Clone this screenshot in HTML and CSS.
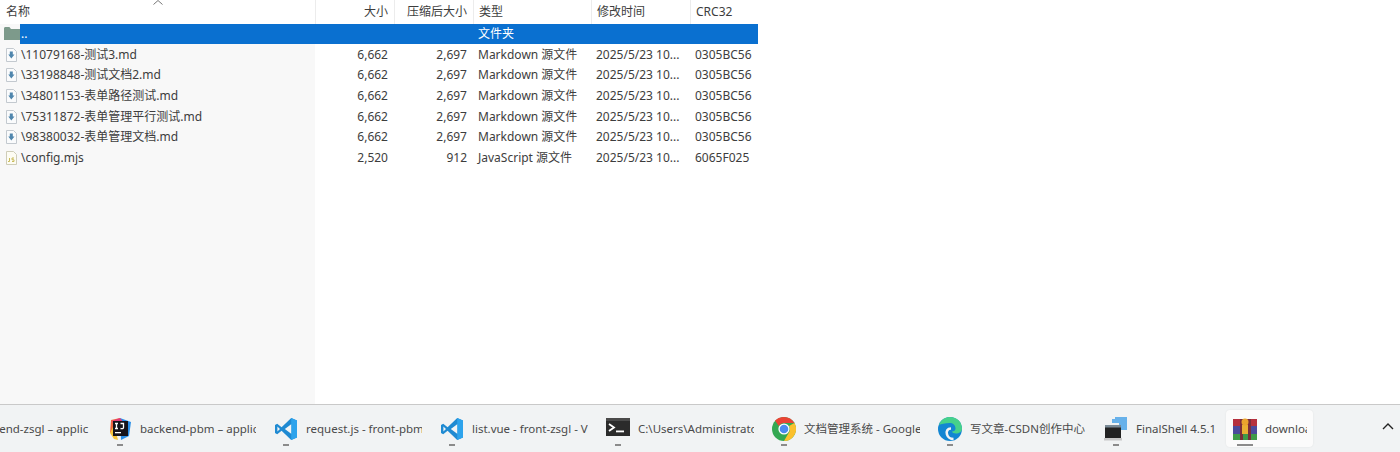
FILE: index.html
```html
<!DOCTYPE html>
<html lang="zh-CN">
<head>
<meta charset="utf-8">
<title>文件列表</title>
<link rel="stylesheet" href="styles.css">
</head>
<body>
<svg class="defs" width="0" height="0" aria-hidden="true">
  <defs>
    <symbol id="md" viewBox="0 0 11 14">
      <path d="M.5.5h7l3 3v10H.5z" fill="#fafbfc" stroke="#c3c9cf"/>
      <path d="M3.800 3.500h3v3h1.700L5.300 10.500 2.300 6.500h1.500z" fill="#4f86ad"/>
    </symbol>
    <symbol id="vscode" viewBox="0 0 24 24">
      <path d="M17.2 1 7.6 10.2 3.2 6.8 1 8v8l2.200 1.200 4.400-3.400 9.600 9.200L23 20.600V3.400z" fill="#1f8ad2"/>
      <path d="M17.2 1 23 3.400v17.200L17.200 23z" fill="#2da3ec"/>
      <path d="M17.2 7.200v9.600L10.800 12zM3.400 9.400 6 12l-2.600 2.600z" fill="#f3f4f5"/>
    </symbol>
  </defs>
</svg>
<main class="window">
  <div class="sidepane"></div>
  <section class="list">
    <div class="row head">
      <span class="c name">名称</span>
      <span class="c num sep">大小</span>
      <span class="c num sep">压缩后大小</span>
      <span class="c sep">类型</span>
      <span class="c sep">修改时间</span>
      <span class="c sep">CRC32</span>
      <svg class="sort" viewBox="0 0 10 5" aria-hidden="true"><path d="M.5 4.500 5 .5l4.500 4" fill="none" stroke="#777"/></svg>
    </div>
    <div class="row parent">
      <svg class="icon folder" viewBox="0 0 16 13" aria-hidden="true"><path d="M0 1.500C0 .7.6 0 1.400 0h4l1.600 2H16v11H0z" fill="#7d9a8b"/></svg>
      <div class="sel">
        <span class="c name">..</span>
        <span class="c num"></span>
        <span class="c num"></span>
        <span class="c">文件夹</span>
        <span class="c"></span>
        <span class="c"></span>
      </div>
    </div>
    <div class="row file">
      <span class="c name"><svg class="icon"><use href="#md"/></svg>\11079168-测试3.md</span>
      <span class="c num">6,662</span><span class="c num">2,697</span><span class="c">Markdown 源文件</span><span class="c">2025/5/23 10...</span><span class="c">0305BC56</span>
    </div>
    <div class="row file">
      <span class="c name"><svg class="icon"><use href="#md"/></svg>\33198848-测试文档2.md</span>
      <span class="c num">6,662</span><span class="c num">2,697</span><span class="c">Markdown 源文件</span><span class="c">2025/5/23 10...</span><span class="c">0305BC56</span>
    </div>
    <div class="row file">
      <span class="c name"><svg class="icon"><use href="#md"/></svg>\34801153-表单路径测试.md</span>
      <span class="c num">6,662</span><span class="c num">2,697</span><span class="c">Markdown 源文件</span><span class="c">2025/5/23 10...</span><span class="c">0305BC56</span>
    </div>
    <div class="row file">
      <span class="c name"><svg class="icon"><use href="#md"/></svg>\75311872-表单管理平行测试.md</span>
      <span class="c num">6,662</span><span class="c num">2,697</span><span class="c">Markdown 源文件</span><span class="c">2025/5/23 10...</span><span class="c">0305BC56</span>
    </div>
    <div class="row file">
      <span class="c name"><svg class="icon"><use href="#md"/></svg>\98380032-表单管理文档.md</span>
      <span class="c num">6,662</span><span class="c num">2,697</span><span class="c">Markdown 源文件</span><span class="c">2025/5/23 10...</span><span class="c">0305BC56</span>
    </div>
    <div class="row file">
      <span class="c name"><svg class="icon" viewBox="0 0 11 14" aria-hidden="true"><path d="M.5.5h7l3 3v10H.5z" fill="#fdfcf3" stroke="#cfcdb8"/><path d="M3.500 7v3.500H2M8 7H6v1.800h2v1.700H6" fill="none" stroke="#c9bb5a"/></svg>\config.mjs</span>
      <span class="c num">2,520</span><span class="c num">912</span><span class="c">JavaScript 源文件</span><span class="c">2025/5/23 10...</span><span class="c">6065F025</span>
    </div>
  </section>
</main>
<footer class="taskbar">
  <div class="task">
    <svg class="tb-icon" aria-hidden="true"><use href="#vscode"/></svg>
    <span class="tb-text">backend-zsgl – applic</span>
  </div>
  <div class="task">
    <svg class="tb-icon" viewBox="0 0 24 24" aria-hidden="true">
      <path d="M3 3 12 1l-4 12-6 3z" fill="#f0663c"/>
      <path d="M12 1l11 4-2 14-8 4z" fill="#2b8fe8"/>
      <path d="M2 16l4-8 4 15-4-1z" fill="#f5c33b"/>
      <path d="M4 4l8-3 4 5-9 6z" fill="#e23a77"/>
      <rect x="5" y="4" width="15" height="15" fill="#16131a"/>
      <path d="M7 6.500h3M8.500 6.500v5M7 11.500h3M12.500 6.500h3v4c0 1-1 1.500-3 1" fill="none" stroke="#fff" stroke-width="1.300"/>
      <rect x="7" y="15" width="6" height="1.300" fill="#fff"/>
    </svg>
    <span class="tb-text">backend-pbm – applic</span>
  </div>
  <div class="task">
    <svg class="tb-icon" aria-hidden="true"><use href="#vscode"/></svg>
    <span class="tb-text">request.js - front-pbm</span>
  </div>
  <div class="task">
    <svg class="tb-icon" aria-hidden="true"><use href="#vscode"/></svg>
    <span class="tb-text">list.vue - front-zsgl - V</span>
  </div>
  <div class="task">
    <svg class="tb-icon" viewBox="0 0 24 24" aria-hidden="true">
      <rect y="1" width="24" height="18" fill="#2b2b2b"/>
      <rect y="1" width="24" height="3" fill="#4a4a4a"/>
      <path d="M3 7l5 3.500L3 14" fill="none" stroke="#fff" stroke-width="1.800"/>
      <rect x="10" y="13.500" width="8" height="1.800" fill="#fff"/>
    </svg>
    <span class="tb-text">C:\Users\Administrator</span>
  </div>
  <div class="task">
    <svg class="tb-icon" viewBox="0 0 24 24" aria-hidden="true">
      <circle cx="12" cy="12" r="12" fill="#33a852"/>
      <path d="M12 0a12 12 0 0 1 10.400 6H12a6 6 0 0 0-5.200 3L3 3.500A12 12 0 0 1 12 0z" fill="#ea4335"/>
      <path d="M22.400 6A12 12 0 0 1 12 24l5.200-9A6 6 0 0 0 17 9z" fill="#fbc02d"/>
      <circle cx="12" cy="12" r="5.600" fill="#fff"/>
      <circle cx="12" cy="12" r="4.300" fill="#4a8bf0"/>
    </svg>
    <span class="tb-text">文档管理系统 - Google</span>
  </div>
  <div class="task">
    <svg class="tb-icon" viewBox="0 0 24 24" aria-hidden="true">
      <circle cx="12" cy="12" r="12" fill="#1386d2"/>
      <path d="M1 8C3 2 8 0 12 0c7 0 12 5 12 11.500 0 3.500-3 5-6 5-2 0-4-.8-4-2 2 0 3.500-1 3.500-3C17.500 8 15 6 11.500 6 7 6 3 7 1 8z" fill="#46d18b"/>
      <path d="M13 11.500c-3.500 0-5 2.500-4 6 .7 2.500 3.500 4.500 6.500 4.500" fill="none" stroke="#f2f3f4" stroke-width="2.600"/>
    </svg>
    <span class="tb-text">写文章-CSDN创作中心</span>
  </div>
  <div class="task short">
    <svg class="tb-icon" viewBox="0 0 24 24" aria-hidden="true">
      <path d="M8 2h3V0h12v13H15V6H8z" fill="#67b1ea"/>
      <rect x="1" y="8" width="16" height="13" fill="#222"/>
      <rect x="1" y="8" width="16" height="2.500" fill="#7a8a96"/>
      <rect y="21" width="18" height="2.500" fill="#c8c8c8"/>
    </svg>
    <span class="tb-text">FinalShell 4.5.12</span>
  </div>
  <div class="task active">
    <svg class="tb-icon" viewBox="0 0 24 24" aria-hidden="true">
      <rect y="2" width="24" height="7" fill="#b5303d"/>
      <rect y="9" width="24" height="8" fill="#4b4a9c"/>
      <rect y="17" width="24" height="6" fill="#3f9a49"/>
      <rect x="7" y="2" width="3" height="21" fill="#7a2f3b"/>
      <rect x="15" y="2" width="3" height="21" fill="#7a2f3b"/>
      <rect x="9" y="8" width="6" height="9" fill="#e9b033"/>
      <circle cx="12" cy="5" r="3.500" fill="#e9a52d"/>
    </svg>
    <span class="tb-text">download</span>
  </div>
  <svg class="chevron" viewBox="0 0 12 7" aria-hidden="true"><path d="M1 6l5-5 5 5" fill="none" stroke="#222" stroke-width="1.400"/></svg>
</footer>
</body>
</html>
```
FILE: styles.css
```css
* { box-sizing: border-box; }
html, body { margin: 0; height: 100%; }
body {
  width: 1400px;
  height: 452px;
  overflow: hidden;
  display: flex;
  flex-direction: column;
  background: #fff;
  color: #3d3d3d;
  font: 12px/20px "Noto Sans", "Noto Sans CJK SC", sans-serif;
}
.defs { position: absolute; }
.window {
  flex: 0 0 405px;
  display: flex;
  position: relative;
  border-bottom: 1px solid #c9c9c9;
}
.sidepane {
  position: absolute;
  left: 0;
  top: 0;
  bottom: 0;
  width: 315px;
  background: #f8f8f8;
}
.list { position: relative; width: 758px; }
.row {
  display: grid;
  grid-template-columns: 315px 79px 79px 118px 99px 68px;
  height: 20.600px;
  align-items: center;
}
.c {
  padding: 0 6px 0 5px;
  white-space: nowrap;
  overflow: hidden;
}
.num { text-align: right; }
.name { display: flex; align-items: center; padding-left: 6px; }
.head {
  position: relative;
  height: 24px;
  background: #fff;
}
.head .sep {
  height: 24px;
  line-height: 24px;
  border-left: 1px solid #ececec;
}
.head .name { background: #fff; height: 24px; }
.sort {
  position: absolute;
  left: 153px;
  top: 0;
  width: 10px;
  height: 5px;
}
.parent {
  display: block;
  position: relative;
  height: 20.600px;
  padding-left: 20px;
}
.parent .folder {
  position: absolute;
  left: 4px;
  top: 3px;
  width: 16px;
  height: 13px;
}
.sel {
  display: grid;
  grid-template-columns: 295px 79px 79px 118px 99px 68px;
  height: 20px;
  align-items: center;
  background: #0a70d0;
  color: #fff;
}
.sel .name { padding-left: 1px; }
.file .icon {
  flex: none;
  width: 11px;
  height: 14px;
  margin-right: 4px;
}
.taskbar {
  flex: 1;
  display: flex;
  align-items: center;
  margin-left: -66px;
  width: 1466px;
  background: #f1f3f4;
  color: #4a4a4a;
  position: relative;
}
.task {
  position: relative;
  flex: 0 0 166px;
  min-width: 0;
  height: 37px;
  display: flex;
  align-items: center;
  gap: 8px;
  padding-left: 8px;
}
.task::after {
  content: "";
  position: absolute;
  left: 17px;
  bottom: 1px;
  width: 6px;
  height: 2px;
  background: #8b8b8b;
}
.task.short { flex-basis: 130px; }
.task.active {
  flex-basis: 87px;
  background: #fbfbfb;
  border-radius: 4px;
  box-shadow: 0 0 2px rgba(0, 0, 0, .08);
  padding-left: 7px;
}
.task.active::after { left: 11px; width: 16px; }
.tb-icon { flex: none; width: 24px; height: 24px; }
.tb-text {
  flex: 1;
  min-width: 0;
  margin-right: 10px;
  overflow: hidden;
  white-space: nowrap;
  font-size: 11.500px;
}
.task.active .tb-text { margin-right: 6px; }
.chevron {
  position: absolute;
  right: 6px;
  top: 18px;
  width: 12px;
  height: 7px;
}
```
